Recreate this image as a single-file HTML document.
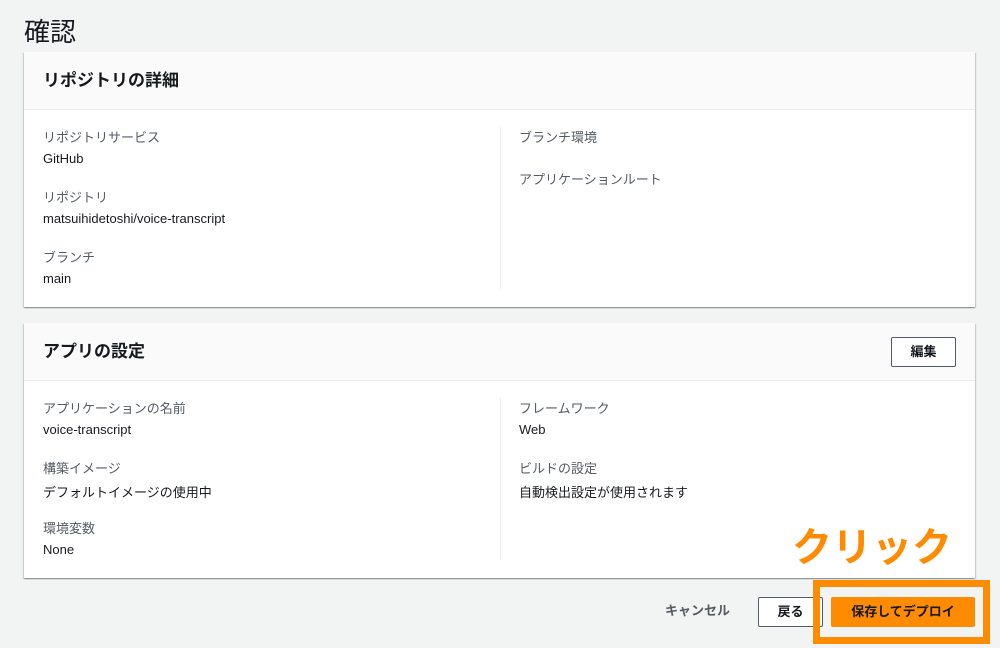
<!DOCTYPE html>
<html><head><meta charset="utf-8"><style>
*{margin:0;padding:0;box-sizing:border-box}
body{width:1000px;height:648px;background:#f2f3f3;font-family:"Liberation Sans","Noto Sans CJK JP",sans-serif;color:#16191f;position:relative;overflow:hidden}
.abs{position:absolute}
h1{position:absolute;left:24px;top:12px;font-size:26px;font-weight:400;color:#16191f}
.card{position:absolute;left:24px;width:951px;background:#fff;box-shadow:0 1px 1px rgba(0,28,36,.3),1px 1px 1px rgba(0,28,36,.15),-1px 1px 1px rgba(0,28,36,.15)}
.hd{height:58px;background:#fafafa;border-bottom:1px solid #eaeded;padding-left:19px;font-size:17px;font-weight:700;line-height:58px;position:relative}
.lbl{position:absolute;font-size:13px;color:#545b64}
.val{position:absolute;font-size:13px;color:#16191f}
.div{position:absolute;left:476px;width:1px;background:#eaeded}
.btn{position:absolute;font-size:13px;font-weight:700;text-align:center;line-height:27px}
</style></head><body>
<h1>確認</h1>
<div class="card" style="top:52px;height:255px">
 <div class="hd">リポジトリの詳細</div>
 <div class="div" style="top:75px;height:162px"></div>
 <div class="lbl" style="left:19px;top:75px">リポジトリサービス</div>
 <div class="val" style="left:19px;top:99px">GitHub</div>
 <div class="lbl" style="left:19px;top:135px">リポジトリ</div>
 <div class="val" style="left:19px;top:159px">matsuihidetoshi/voice-transcript</div>
 <div class="lbl" style="left:19px;top:195px">ブランチ</div>
 <div class="val" style="left:19px;top:219px">main</div>
 <div class="lbl" style="left:495px;top:75px">ブランチ環境</div>
 <div class="lbl" style="left:495px;top:117px">アプリケーションルート</div>
</div>
<div class="card" style="top:323px;height:255px">
 <div class="hd">アプリの設定
  <div class="btn" style="right:19px;top:14px;width:65px;height:30px;border:1px solid #545b64;border-radius:2px;background:#fff;font-size:13px;line-height:28px">編集</div>
 </div>
 <div class="div" style="top:75px;height:162px"></div>
 <div class="lbl" style="left:19px;top:75px">アプリケーションの名前</div>
 <div class="val" style="left:19px;top:99px">voice-transcript</div>
 <div class="lbl" style="left:19px;top:135px">構築イメージ</div>
 <div class="val" style="left:19px;top:159px">デフォルトイメージの使用中</div>
 <div class="lbl" style="left:19px;top:195px">環境変数</div>
 <div class="val" style="left:19px;top:219px">None</div>
 <div class="lbl" style="left:495px;top:75px">フレームワーク</div>
 <div class="val" style="left:495px;top:99px">Web</div>
 <div class="lbl" style="left:495px;top:135px">ビルドの設定</div>
 <div class="val" style="left:495px;top:159px">自動検出設定が使用されます</div>
</div>
<div class="abs" style="left:792px;top:515px;font-size:40px;font-weight:700;color:#ff8c00;letter-spacing:0">クリック</div>
<div class="btn" style="left:660px;top:597px;width:75px;color:#545b64">キャンセル</div>
<div class="btn" style="left:758px;top:597px;width:65px;height:30px;border:1px solid #545b64;border-radius:2px;background:#fff;line-height:28px">戻る</div>
<div class="btn" style="left:831px;top:597px;width:144px;height:30px;background:#ff8c00;border-radius:2px;line-height:30px">保存してデプロイ</div>
<div class="abs" style="left:813px;top:580px;width:177px;height:64px;border:7px solid #ff8c00"></div>
</body></html>
